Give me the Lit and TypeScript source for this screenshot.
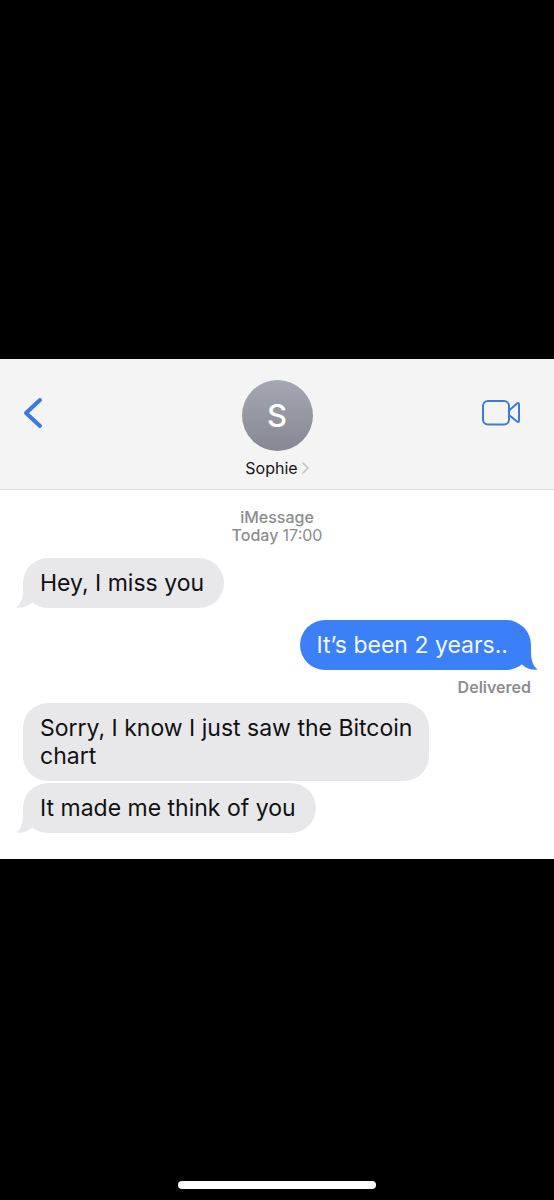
import { LitElement, html, css, svg } from "lit";
import { customElement, property } from "lit/decorators.js";

@customElement("chat-bubble")
class ChatBubble extends LitElement {
  @property() from: "me" | "them" = "them";
  @property({ type: Boolean }) tail = false;
  @property({ type: Boolean }) wide = false;

  static styles = css`
    :host {
      display: flex;
    }
    .bubble {
      position: relative;
      box-sizing: border-box;
      max-width: 80%;
      margin: 0;
      padding: 11px 20px 11px 17px;
      border-radius: 25px;
      background: #e8e8ea;
      color: #111113;
      font-size: 23px;
      line-height: 28px;
    }
    .wide {
      padding-right: 10px;
    }
    .me {
      margin-left: auto;
      padding-right: 23px;
      background: #3b80f7;
      color: #f4f8ff;
    }
    .tail {
      position: absolute;
      bottom: 0;
      left: -7px;
      width: 24px;
      height: 25px;
      fill: #e8e8ea;
    }
    .me .tail {
      left: auto;
      right: -7px;
      fill: #3b80f7;
      transform: scaleX(-1);
    }
  `;

  render() {
    return html`<p class="bubble ${this.from} ${this.wide ? "wide" : ""}">
      ${this.tail
        ? html`<svg class="tail" viewBox="0 0 24 25" aria-hidden="true">
            ${svg`<path d="M7 0V7C7 15 5 21.500 0 24.600C6 25.300 12 23.500 16 19.500L22 12V0Z" />`}
          </svg>`
        : null}<slot></slot>
    </p>`;
  }
}

@customElement("app-root")
class AppRoot extends LitElement {
  static styles = css`
    :host {
      display: grid;
      grid-template-rows: 1fr auto 1fr;
      box-sizing: border-box;
      min-height: 100vh;
      padding-top: 18px;
      background: #000;
      font-family: Inter, "Liberation Sans", sans-serif;
    }
    .screen {
      grid-row: 2;
      background: #fff;
    }
    .header {
      display: grid;
      grid-template-columns: 1fr auto 1fr;
      box-sizing: border-box;
      height: 131px;
      padding: 21px 33px 0 23px;
      border-bottom: 1px solid #dcdcde;
      background: #f4f4f5;
    }
    button {
      display: block;
      padding: 0;
      border: 0;
      background: none;
      font: inherit;
      color: #3b79dd;
      cursor: pointer;
    }
    svg {
      display: block;
      fill: none;
      stroke: currentColor;
      stroke-linecap: round;
      stroke-linejoin: round;
    }
    .back,
    .video {
      align-self: start;
      margin-top: 17px;
    }
    .back {
      justify-self: start;
    }
    .video {
      justify-self: end;
      margin-top: 19px;
    }
    .contact {
      display: flex;
      flex-direction: column;
      align-items: center;
      align-self: start;
      gap: 8px;
      margin-left: 10px;
      color: #161618;
    }
    .avatar {
      display: grid;
      place-items: center;
      width: 71px;
      height: 71px;
      border-radius: 50%;
      background: linear-gradient(#a5a8b3, #858892);
      color: #fff;
      font-size: 31px;
      font-weight: 500;
    }
    .name {
      display: flex;
      align-items: center;
      gap: 4px;
      font-size: 16px;
      line-height: 18px;
    }
    .name svg {
      color: #bfbfc3;
    }
    .chat {
      padding: 18px 23px 26px;
    }
    .stamp,
    .status {
      margin: 0;
      color: #8c8c91;
      font-size: 16px;
      font-weight: 500;
      line-height: 18px;
    }
    .stamp {
      margin-bottom: 14px;
      text-align: center;
    }
    .stamp time {
      font-weight: 400;
    }
    .sent,
    .received {
      display: flex;
      flex-direction: column;
    }
    .sent {
      gap: 8px;
      margin: 12px 0 7px;
    }
    .received {
      gap: 2px;
    }
    .status {
      text-align: right;
      font-weight: 600;
    }
    .home {
      grid-row: 3;
      align-self: end;
      justify-self: center;
      width: 198px;
      height: 8px;
      margin-bottom: 11px;
      border-radius: 4px;
      background: #fff;
    }
  `;

  render() {
    return html`
      <main class="screen">
        <header class="header">
          <button class="back" aria-label="Back">
            <svg width="20" height="32" viewBox="0 0 20 32" stroke-width="4">
              <path d="M17 3L3 16L17 29" />
            </svg>
          </button>
          <button class="contact">
            <span class="avatar">S</span>
            <span class="name"
              >Sophie<svg width="7" height="12" viewBox="0 0 7 12" stroke-width="1.500">
                <path d="M1 1L6 6L1 11" /></svg
            ></span>
          </button>
          <button class="video" aria-label="Video call">
            <svg width="39" height="28" viewBox="0 0 39 28" stroke-width="2">
              <rect x="1" y="2" width="26" height="23.500" rx="5" />
              <path d="M27 11.500L35 4.500Q37 3.300 37 5.500V21.500Q37 23.800 35 22.500L27 16" />
            </svg>
          </button>
        </header>
        <section class="chat" aria-label="Conversation">
          <p class="stamp">iMessage<br />Today <time>17:00</time></p>
          <chat-bubble from="them" tail>Hey, I miss you</chat-bubble>
          <div class="sent">
            <chat-bubble from="me" tail>It’s been 2 years..</chat-bubble>
            <p class="status">Delivered</p>
          </div>
          <div class="received">
            <chat-bubble from="them" wide>Sorry, I know I just saw the Bitcoin chart</chat-bubble>
            <chat-bubble from="them" tail>It made me think of you</chat-bubble>
          </div>
        </section>
      </main>
      <div class="home"></div>
    `;
  }
}
